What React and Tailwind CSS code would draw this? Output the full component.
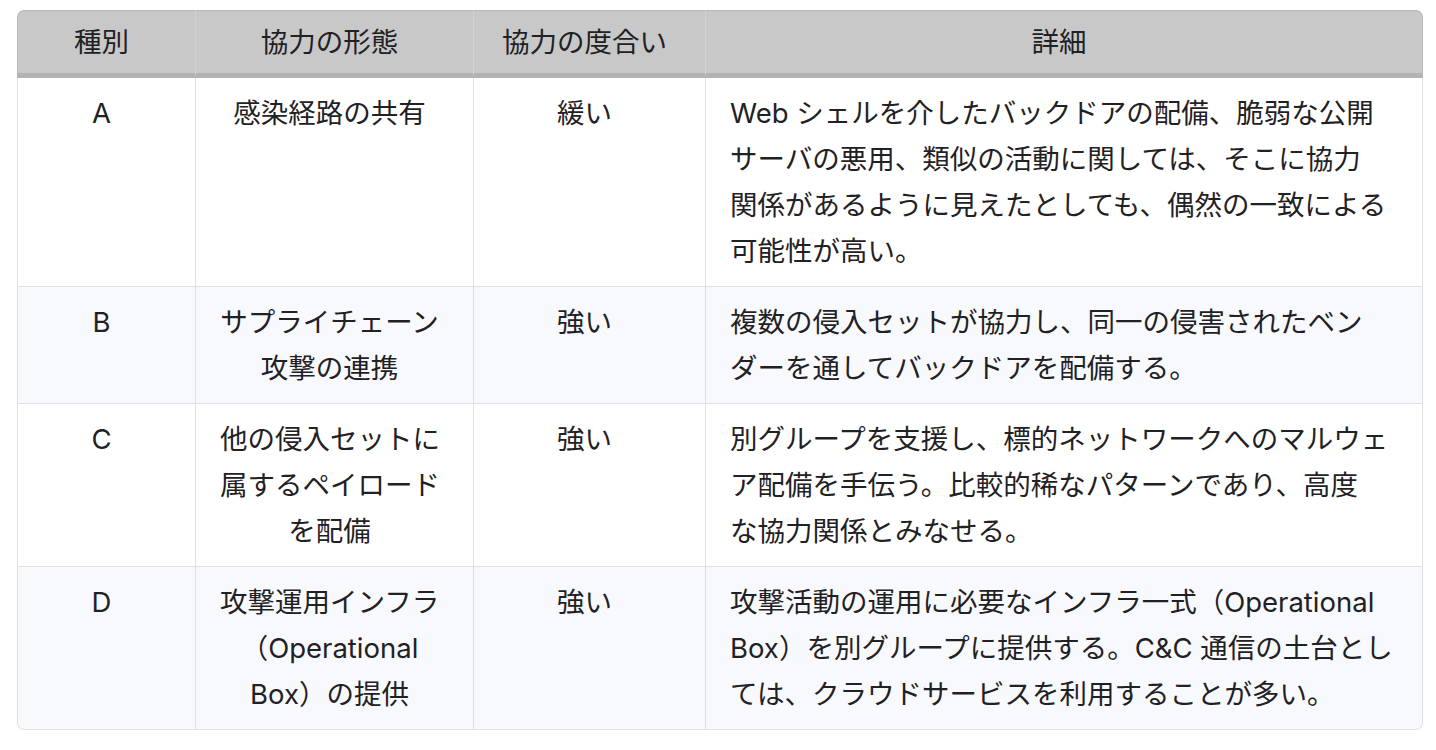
const rows = [
  {
    kind: 'A',
    form: ['感染経路の共有'],
    degree: '緩い',
    detail: [
      'Web シェルを介したバックドアの配備、脆弱な公開',
      'サーバの悪用、類似の活動に関しては、そこに協力',
      '関係があるように見えたとしても、偶然の一致による',
      '可能性が高い。',
    ],
  },
  {
    kind: 'B',
    form: ['サプライチェーン', '攻撃の連携'],
    degree: '強い',
    detail: ['複数の侵入セットが協力し、同一の侵害されたベン', 'ダーを通してバックドアを配備する。'],
  },
  {
    kind: 'C',
    form: ['他の侵入セットに', '属するペイロード', 'を配備'],
    degree: '強い',
    detail: [
      '別グループを支援し、標的ネットワークへのマルウェ',
      'ア配備を手伝う。比較的稀なパターンであり、高度',
      'な協力関係とみなせる。',
    ],
  },
  {
    kind: 'D',
    form: ['攻撃運用インフラ', '（Operational', 'Box）の提供'],
    degree: '強い',
    detail: [
      '攻撃活動の運用に必要なインフラ一式（Operational',
      'Box）を別グループに提供する。C&C 通信の土台とし',
      'ては、クラウドサービスを利用することが多い。',
    ],
  },
];

function Lines({ lines }) {
  return lines.map((line, i) => (
    <span key={i} className="block whitespace-nowrap">
      {line}
    </span>
  ));
}

export default function App() {
  const th = 'pl-6 pr-[34px] py-2 font-normal text-center align-top border-t border-t-[#b8b8b8] border-b-[5px] border-b-[#b3b3b3]';
  const td = 'pl-6 pr-[34px] py-3 align-top border-b border-r border-[#dfe0e4]';

  return (
    <div className="min-h-screen bg-white pt-[10px] pl-[17px]">
      <div className="w-[1406px] rounded-[7px] overflow-hidden">
        <table className="w-full table-fixed border-separate border-spacing-0 text-[27.5px] leading-[46px] text-[#1f2124] font-['Inter','Noto_Sans_CJK_JP',sans-serif]">
          <thead className="bg-[#c8c8c8]">
            <tr>
              <th className={`${th} w-[179px] border-l border-l-[#b8b8b8] border-r border-r-[#d2d2d2] rounded-tl-[7px]`}>種別</th>
              <th className={`${th} w-[278px] border-r border-r-[#d2d2d2]`}>協力の形態</th>
              <th className={`${th} w-[232px] border-r border-r-[#d2d2d2]`}>協力の度合い</th>
              <th className={`${th} border-r border-r-[#b8b8b8] rounded-tr-[7px]`}>詳細</th>
            </tr>
          </thead>
          <tbody>
            {rows.map((row, i) => (
              <tr key={row.kind} className={i % 2 === 1 ? 'bg-[#f8f9fd]' : 'bg-white'}>
                <td className={`${td} border-l text-center ${i === rows.length - 1 ? 'rounded-bl-[7px]' : ''}`}>{row.kind}</td>
                <td className={`${td} text-center`}>
                  <Lines lines={row.form} />
                </td>
                <td className={`${td} text-center`}>{row.degree}</td>
                <td className={`${td} text-left ${i === rows.length - 1 ? 'rounded-br-[7px]' : ''}`}>
                  <Lines lines={row.detail} />
                </td>
              </tr>
            ))}
          </tbody>
        </table>
      </div>
    </div>
  );
}
